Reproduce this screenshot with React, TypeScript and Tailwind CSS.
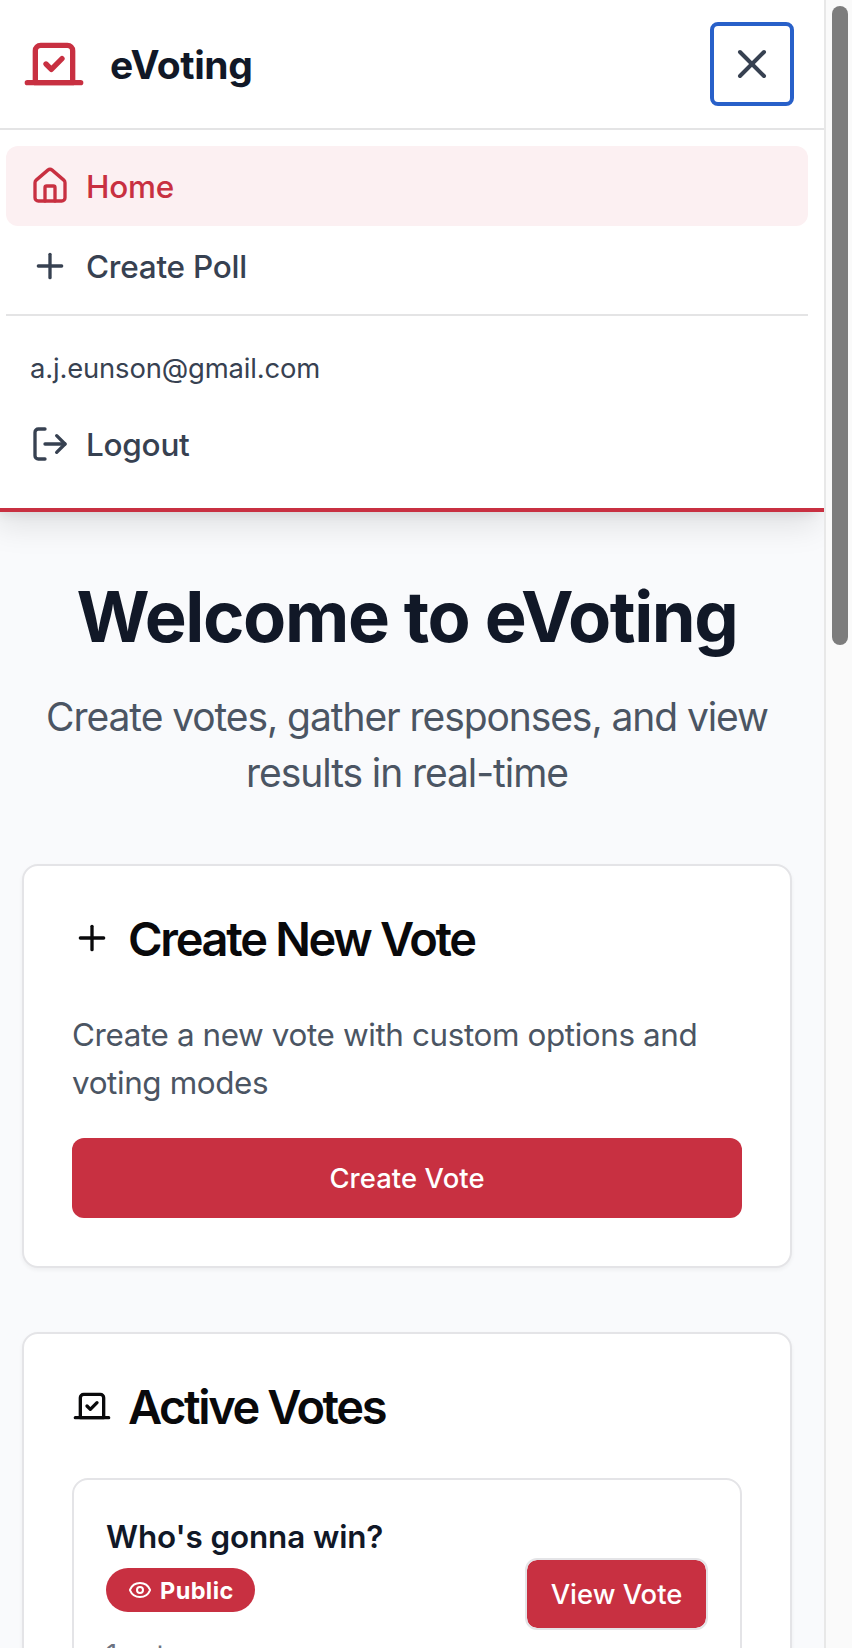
import { Eye, House, LogOut, Plus, Vote, X } from "lucide-react";

function Navigation() {
  return (
    <nav className="relative z-10 h-[512px] border-b-4 border-[#c83041] bg-white shadow-[0_20px_30px_-6px_rgba(0,0,0,0.1),0_8px_12px_-8px_rgba(0,0,0,0.1)]">
      <div className="flex h-32 items-center justify-between pr-[30px] pl-8">
        <div className="flex items-center gap-6">
          <Vote size={64} className="text-[#c83041]" />
          <span className="pt-px text-[39px] leading-[56px] font-bold tracking-[-0.4px] text-[#111827]">eVoting</span>
        </div>
        <button className="flex h-[84px] w-[84px] items-center justify-center rounded-lg border-4 border-[#2860c9] text-[#374151]">
          <X size={48} />
        </button>
      </div>
      <div className="border-t-2 border-[#e4e4e5] px-4 pt-4 text-[#374151]">
        <a className="flex h-20 items-center gap-4 rounded-xl bg-[#fcf0f2] px-6 text-[31.5px] font-medium tracking-[-0.25px] text-[#c83041]">
          <House size={40} />
          <span className="pt-px">Home</span>
        </a>
        <a className="flex h-20 items-center gap-4 px-6 text-[31.5px] font-medium tracking-[-0.25px]">
          <Plus size={40} />
          <span className="pt-px">Create Poll</span>
        </a>
        <div className="mt-2 border-t-2 border-[#e4e4e5] pt-8">
          <p className="px-6 text-[27.4px] leading-10 tracking-[-0.15px]">a.j.eunson@gmail.com</p>
          <button className="mt-4 flex h-20 items-center gap-4 px-6 text-[31.5px] font-medium tracking-[-0.25px]">
            <LogOut size={40} />
            <span className="pt-px">Logout</span>
          </button>
        </div>
      </div>
    </nav>
  );
}

function CreateCard() {
  return (
    <section className="rounded-2xl border-2 border-[#e4e4e7] bg-white p-12 shadow-[0_2px_4px_rgba(0,0,0,0.05)]">
      <h2 className="flex h-12 items-center gap-4 text-[47px] leading-[48px] font-semibold tracking-[-2.3px] text-[#09090b]">
        <Plus size={40} />
        <span className="pt-px">Create New Vote</span>
      </h2>
      <p className="mt-[49px] text-[31.4px] leading-[48px] tracking-[-0.38px] text-[#4b5563]">
        Create a new vote with custom options and
        <br />
        voting modes
      </p>
      <button className="mt-[31px] flex h-20 w-full items-center justify-center rounded-xl bg-[#c83041] text-[27.4px] font-medium tracking-[0.1px] text-white">
        <span className="pt-0.5">Create Vote</span>
      </button>
    </section>
  );
}

function ActiveCard() {
  return (
    <section className="mt-16 rounded-2xl border-2 border-[#e4e4e7] bg-white p-12 shadow-[0_2px_4px_rgba(0,0,0,0.05)]">
      <h2 className="flex h-12 items-center gap-4 text-[47px] leading-[48px] font-semibold tracking-[-2.4px] text-[#09090b]">
        <Vote size={40} />
        <span className="pt-px">Active Votes</span>
      </h2>
      <div className="mt-12 flex items-start justify-between rounded-2xl border-2 border-[#e4e4e7] p-8">
        <div>
          <h3 className="pt-px text-[31.4px] leading-[48px] font-semibold tracking-[-0.1px] text-[#111827]">Who's gonna win?</h3>
          <div className="mt-[7px] flex h-11 w-[149px] items-center gap-2 rounded-full bg-[#c83041] pl-[22px] text-[23.5px] leading-8 font-bold tracking-[0.4px] text-white">
            <Eye size={24} />
            <span className="pt-px">Public</span>
          </div>
          <p className="mt-[22px] text-[27.4px] leading-10 text-[#6b7280]">1 vote</p>
        </div>
        <button className="mt-[46px] flex h-[72px] w-[183px] items-center justify-center rounded-xl border-2 border-[#e4e4e7] bg-[#c83041] bg-clip-padding text-[27.4px] font-medium text-white">
          <span className="pt-0.5">View Vote</span>
        </button>
      </div>
    </section>
  );
}

export default function App() {
  return (
    <div className="flex h-[1648px] w-[852px] overflow-hidden bg-[#f9fafc] font-['Inter',sans-serif]">
      <div className="-ml-2.5 h-full w-[834px] shrink-0 overflow-hidden">
        <Navigation />
        <main className="px-8 pt-[65px]">
          <header className="text-center">
            <h1 className="text-[70.5px] leading-[80px] font-bold tracking-[-1.4px] text-[#111827]">Welcome to eVoting</h1>
            <p className="mt-8 mb-[63px] text-[39px] leading-[56px] tracking-[-1.08px] text-[#4b5563]">
              Create votes, gather responses, and view
              <br />
              results in real-time
            </p>
          </header>
          <CreateCard />
          <ActiveCard />
        </main>
      </div>
      <div className="h-full w-7 shrink-0 border-l-2 border-[#e8e8e8] bg-[#fafafa] pt-1.5 pl-1.5">
        <div className="h-[639px] w-4 rounded-full bg-[#7d7d7d]" />
      </div>
    </div>
  );
}
